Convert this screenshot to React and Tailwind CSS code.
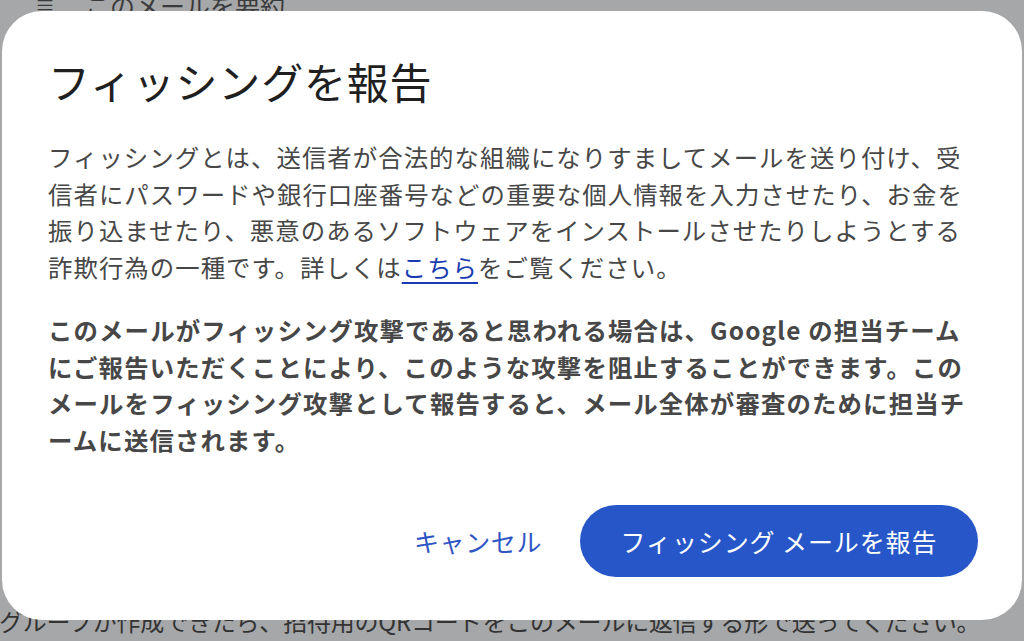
import React from "react";

export default function App() {
  const font = { fontFamily: '"Noto Sans CJK JP", "Noto Sans", sans-serif' };
  return (
    <div className="relative w-[1024px] h-[641px] overflow-hidden bg-[#a6a7a9]" style={font}>
      {/* background page content, dimmed by the overlay */}
      <div className="absolute left-[35px] top-[-11px] flex items-center gap-[30px] text-[25px] leading-[32px] text-[#3a3a3a]">
        <span className="text-[20px]">≡</span>
        <span>このメールを要約</span>
      </div>
      <div className="absolute left-[-1px] top-[605px] whitespace-nowrap text-[24px] leading-[32px] text-[#333] tracking-[-0.2px]">
        グループが作成できたら、招待用のQRコードをこのメールに返信する形で送ってください。
      </div>

      {/* dialog */}
      <div className="absolute left-[2px] top-[11px] w-[1020px] h-[609px] rounded-[40px] bg-white flex flex-col pl-[46px] pr-[44px] pt-[40px] pb-[43px]">
        <h1 className="text-[42px] leading-[60px] text-[#1f1f1f] font-normal tracking-[0.8px]">
          フィッシングを報告
        </h1>
        <p className="mt-[28px] text-[24.4px] leading-[36.5px] tracking-[1.05px] text-[#474747] whitespace-nowrap">
          フィッシングとは、送信者が合法的な組織になりすましてメールを送り付け、受<br />
          信者にパスワードや銀行口座番号などの重要な個人情報を入力させたり、お金を<br />
          振り込ませたり、悪意のあるソフトウェアをインストールさせたりしようとする<br />
          詐欺行為の一種です。詳しくは
          <a className="text-[#1a3cb0] underline underline-offset-[5px]" href="#">こちら</a>
          をご覧ください。
        </p>
        <p className="mt-[27px] text-[24.4px] leading-[36.5px] tracking-[1.15px] font-bold text-[#474747] whitespace-nowrap">
          このメールがフィッシング攻撃であると思われる場合は、Google の担当チーム<br />
          にご報告いただくことにより、このような攻撃を阻止することができます。この<br />
          メールをフィッシング攻撃として報告すると、メール全体が審査のために担当チ<br />
          ームに送信されます。
        </p>
        <div className="mt-auto flex items-center justify-end gap-[38px]">
          <button className="text-[25px] leading-[32px] text-[#2f55c4] tracking-[0.6px]">キャンセル</button>
          <button className="h-[72px] w-[398px] rounded-full bg-[#2656c8] text-white text-[25px] leading-[32px] tracking-[0.9px]">
            フィッシング メールを報告
          </button>
        </div>
      </div>
    </div>
  );
}
